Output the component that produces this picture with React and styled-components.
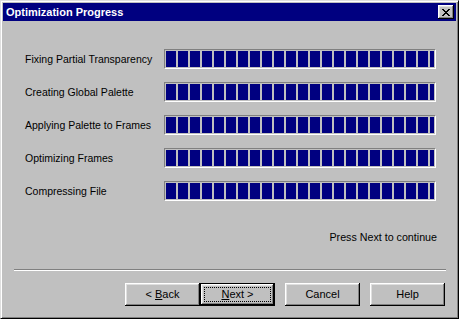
import React from "react";
import styled, { createGlobalStyle } from "styled-components";

const GlobalStyle = createGlobalStyle`
  html, body { margin: 0; padding: 0; background: #c0c0c0; }
  body { font-family: "Liberation Sans", Arial, sans-serif; font-size: 11px; }
`;

const Window = styled.div`
  box-sizing: border-box;
  width: 459px;
  height: 319px;
  background: #c0c0c0;
  border: 1px solid;
  border-color: #dfdfdf #000 #000 #dfdfdf;
  box-shadow: inset 1px 1px #fff, inset -1px -1px #808080;
  padding: 2px;
  display: flex;
  flex-direction: column;
`;

const TitleBar = styled.div`
  height: 18px;
  background: #000080;
  display: flex;
  align-items: center;
  justify-content: space-between;
  padding: 0 2px 0 3px;
`;

const Title = styled.span`
  color: #fff;
  font-weight: bold;
  font-size: 11px;
  line-height: 13px;
`;

const CloseButton = styled.div`
  box-sizing: border-box;
  width: 16px;
  height: 14px;
  background: #c0c0c0;
  box-shadow: inset -1px -1px #000, inset 1px 1px #fff, inset -2px -2px #808080, inset 2px 2px #dfdfdf;
  display: flex;
  align-items: center;
  justify-content: center;
`;

const Body = styled.div`
  flex: 1;
  display: flex;
  flex-direction: column;
  padding: 28px 10px 0 22px;
`;

const Steps = styled.div`
  display: grid;
  grid-template-columns: 139px 272px;
  row-gap: 13px;
  align-items: center;
`;

const Label = styled.div`
  color: #000;
  font-size: 10.5px;
  line-height: 13px;
  white-space: nowrap;
`;

const Bar = styled.div`
  box-sizing: border-box;
  height: 20px;
  padding: 1px;
  border: 1px solid;
  border-color: #808080 #fff #fff #808080;
`;

const Blocks = styled.div`
  height: 100%;
  background: repeating-linear-gradient(to right, #000080 0 10px, transparent 10px 12px);
`;

const Hint = styled.div`
  margin-top: 30px;
  align-self: flex-end;
  padding-right: 9px;
  font-size: 10.7px;
  line-height: 13px;
  color: #000;
`;

const Separator = styled.div`
  margin: 25px 0 12px -11px;
  border-top: 1px solid #808080;
  border-bottom: 1px solid #fff;
  height: 0;
`;

const Buttons = styled.div`
  display: flex;
  justify-content: flex-end;
  gap: 10px;
  padding-right: 1px;
`;

const Pair = styled.div`
  display: flex;
`;

const Button = styled.div`
  box-sizing: border-box;
  width: 75px;
  height: 23px;
  background: #c0c0c0;
  color: #000;
  line-height: 13px;
  display: flex;
  align-items: center;
  justify-content: center;
  position: relative;
  box-shadow: ${(p) =>
    p.$default
      ? "inset 0 0 0 1px #000, inset -2px -2px #000, inset 2px 2px #fff, inset -3px -3px #808080, inset 3px 3px #dfdfdf"
      : "inset -1px -1px #000, inset 1px 1px #fff, inset -2px -2px #808080, inset 2px 2px #dfdfdf"};
  ${(p) =>
    p.$default &&
    `&::after {
      content: "";
      position: absolute;
      inset: 4px;
      border: 1px dotted #000;
    }`}
`;

const CloseIcon = () => (
  <svg width="8" height="7" viewBox="0 0 8 7" shapeRendering="crispEdges">
    <g fill="#000">
      <rect x="0" y="0" width="2" height="1" />
      <rect x="6" y="0" width="2" height="1" />
      <rect x="1" y="1" width="2" height="1" />
      <rect x="5" y="1" width="2" height="1" />
      <rect x="2" y="2" width="4" height="1" />
      <rect x="3" y="3" width="2" height="1" />
      <rect x="2" y="4" width="4" height="1" />
      <rect x="1" y="5" width="2" height="1" />
      <rect x="5" y="5" width="2" height="1" />
      <rect x="0" y="6" width="2" height="1" />
      <rect x="6" y="6" width="2" height="1" />
    </g>
  </svg>
);

const steps = [
  "Fixing Partial Transparency",
  "Creating Global Palette",
  "Applying Palette to Frames",
  "Optimizing Frames",
  "Compressing File",
];

export default function App() {
  return (
    <>
      <GlobalStyle />
      <Window>
        <TitleBar>
          <Title>Optimization Progress</Title>
          <CloseButton>
            <CloseIcon />
          </CloseButton>
        </TitleBar>
        <Body>
          <Steps>
            {steps.map((s) => (
              <React.Fragment key={s}>
                <Label>{s}</Label>
                <Bar>
                  <Blocks />
                </Bar>
              </React.Fragment>
            ))}
          </Steps>
          <Hint>Press Next to continue</Hint>
          <Separator />
          <Buttons>
            <Pair>
              <Button>
                &lt;&nbsp;<u>B</u>ack
              </Button>
              <Button $default>
                <u>N</u>ext&nbsp;&gt;
              </Button>
            </Pair>
            <Button>Cancel</Button>
            <Button>Help</Button>
          </Buttons>
        </Body>
      </Window>
    </>
  );
}
